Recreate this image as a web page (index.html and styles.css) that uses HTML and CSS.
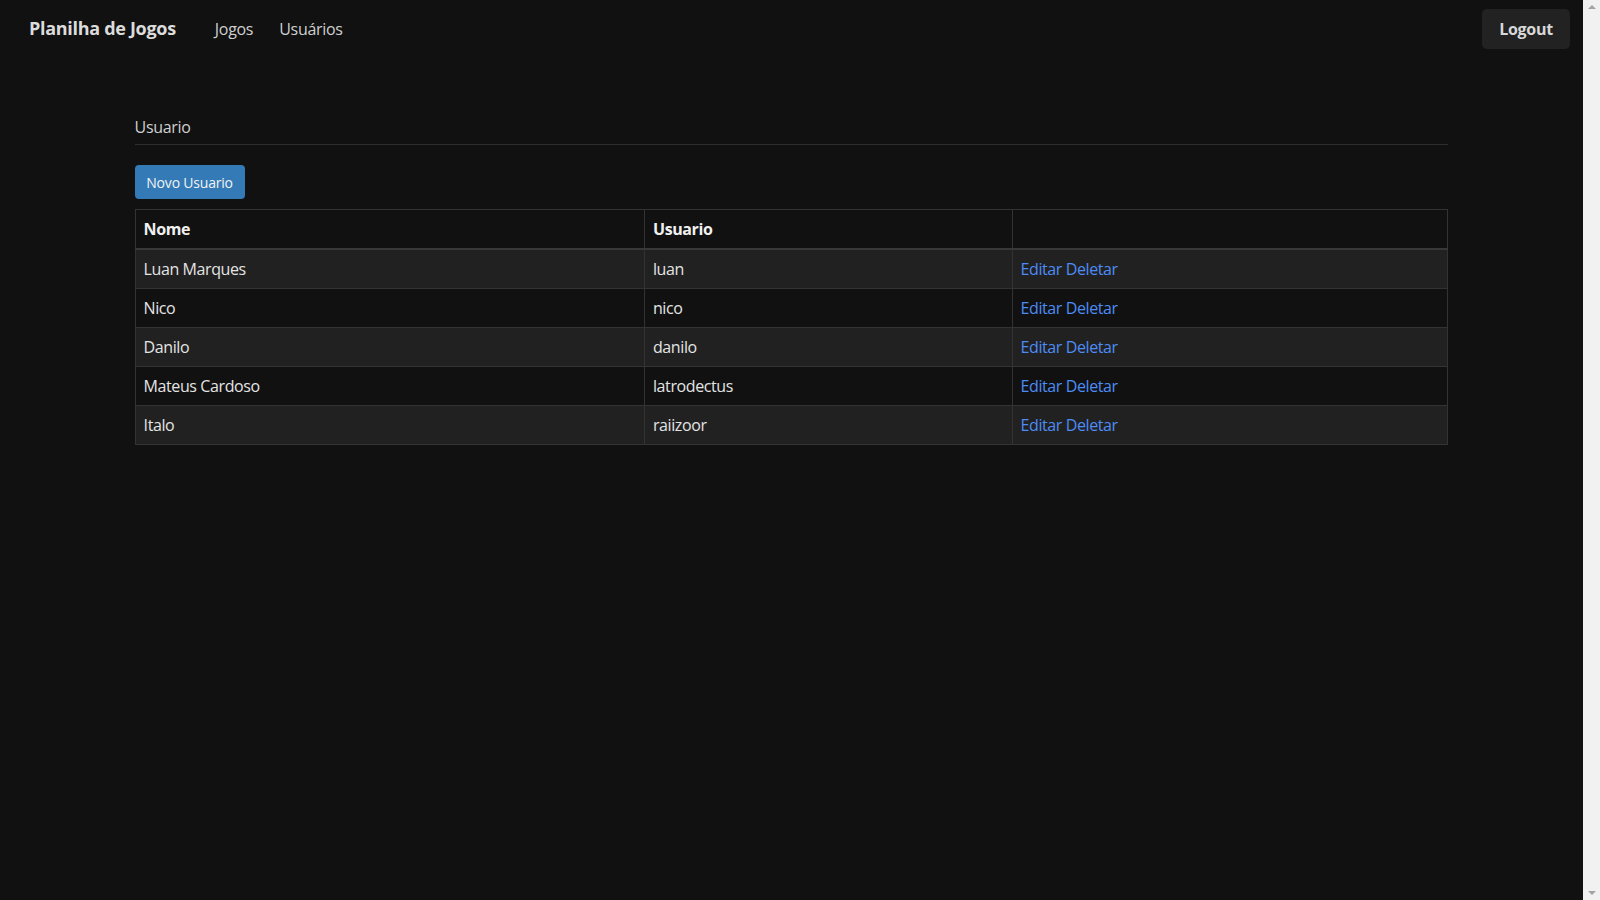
FILE: index.html
```html
<!DOCTYPE html>
<html lang="pt">
<head>
<meta charset="utf-8">
<title>Planilha de Jogos</title>
<link rel="stylesheet" href="styles.css">
</head>
<body>
<div class="page">
  <nav class="navbar">
    <a class="brand" href="#">Planilha de Jogos</a>
    <ul class="nav-links">
      <li><a href="#">Jogos</a></li>
      <li><a href="#">Usuários</a></li>
    </ul>
    <button class="logout">Logout</button>
  </nav>
  <main class="container">
    <h2 class="page-title">Usuario</h2>
    <button class="btn-primary">Novo Usuario</button>
    <table class="table">
      <thead>
        <tr><th class="col-nome">Nome</th><th class="col-user">Usuario</th><th></th></tr>
      </thead>
      <tbody>
        <tr><td>Luan Marques</td><td>luan</td><td><a href="#">Editar</a> <a href="#">Deletar</a></td></tr>
        <tr><td>Nico</td><td>nico</td><td><a href="#">Editar</a> <a href="#">Deletar</a></td></tr>
        <tr><td>Danilo</td><td>danilo</td><td><a href="#">Editar</a> <a href="#">Deletar</a></td></tr>
        <tr><td>Mateus Cardoso</td><td>latrodectus</td><td><a href="#">Editar</a> <a href="#">Deletar</a></td></tr>
        <tr><td>Italo</td><td>raiizoor</td><td><a href="#">Editar</a> <a href="#">Deletar</a></td></tr>
      </tbody>
    </table>
  </main>
</div>
<div class="scrollbar" aria-hidden="true">
  <span class="arrow-up"></span>
  <span class="arrow-down"></span>
</div>
</body>
</html>
```
FILE: styles.css
```css
html, body {
  height: 100%;
}
body {
  margin: 0;
  background: #111111;
  color: #e4e4e4;
  font-family: "Open Sans", "Noto Sans", sans-serif;
  font-size: 16px;
  display: flex;
  overflow: hidden;
}
a {
  text-decoration: none;
}
.page {
  flex: 1;
  min-width: 0;
}
.scrollbar {
  width: 17px;
  flex: none;
  background: #f1f1f1;
  display: flex;
  flex-direction: column;
  justify-content: space-between;
  align-items: center;
  padding: 5px 0;
  box-sizing: border-box;
}
.arrow-up {
  width: 0;
  height: 0;
  border-left: 4px solid transparent;
  border-right: 4px solid transparent;
  border-bottom: 4px solid #a3a3a3;
}
.arrow-down {
  width: 0;
  height: 0;
  border-left: 4px solid transparent;
  border-right: 4px solid transparent;
  border-top: 4px solid #a3a3a3;
}
.navbar {
  display: flex;
  align-items: center;
  height: 58px;
  padding: 0 13px 0 29px;
}
.brand {
  color: #dcdcdc;
  font-weight: 700;
  font-size: 18px;
  letter-spacing: -0.3px;
  margin-top: -3px;
}
.nav-links {
  display: flex;
  list-style: none;
  margin: 0 0 0 39px;
  padding: 0;
  gap: 26px;
}
.nav-links a {
  color: #cfcfcf;
  font-size: 16px;
  letter-spacing: -0.3px;
}
.logout {
  margin-left: auto;
  background: #222222;
  color: #d8d8d8;
  border: none;
  border-radius: 5px;
  font-family: inherit;
  font-weight: 700;
  font-size: 16px;
  letter-spacing: -0.3px;
  width: 88px;
  height: 40px;
}
.container {
  width: 83%;
  margin: 0 auto;
}
.page-title {
  margin: 58px 0 0;
  padding-bottom: 6px;
  font-size: 16px;
  font-weight: 400;
  letter-spacing: -0.3px;
  color: #cfcfcf;
  border-bottom: 1px solid #2e2e2e;
}
.btn-primary {
  margin-top: 20px;
  background: #337ab7;
  color: #f2f2f2;
  border: none;
  border-radius: 4px;
  font-family: inherit;
  font-size: 14px;
  letter-spacing: -0.2px;
  width: 110px;
  height: 34px;
  display: block;
}
.table {
  margin-top: 10px;
  width: 100%;
  border-collapse: collapse;
  border: 1px solid #333333;
  letter-spacing: -0.4px;
}
.table th,
.table td {
  text-align: left;
  padding: 8px 8px;
  line-height: 22px;
  border: 1px solid #333333;
}
.table th {
  border-bottom: 2px solid #383838;
  font-weight: 700;
  color: #f0f0f0;
}
.col-nome { width: 38.8%; }
.col-user { width: 28%; }
.table tbody tr:nth-child(odd) {
  background: #212121;
}
.table td a {
  color: #4d8cf5;
}
```
